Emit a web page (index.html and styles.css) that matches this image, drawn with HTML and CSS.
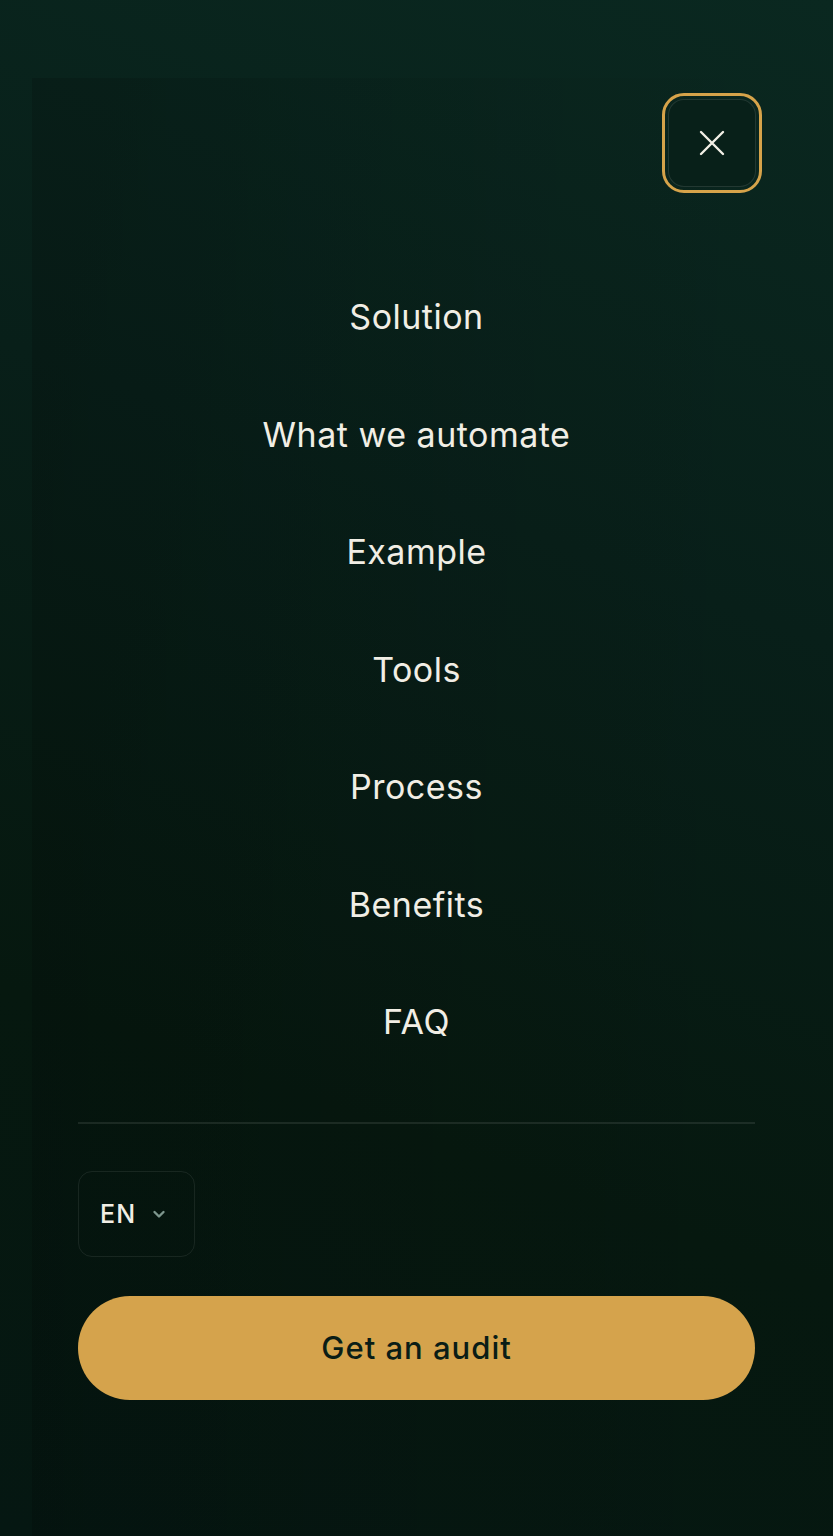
FILE: index.html
```html
<!DOCTYPE html>
<html lang="en">
<head>
<meta charset="utf-8">
<title>Menu</title>
<link rel="stylesheet" href="styles.css">
</head>
<body>
<div class="page">
  <div class="panel">
    <header class="top">
      <button class="close" aria-label="Close menu">
        <svg width="28" height="28" viewBox="0 0 28 28" fill="none" stroke="#f2efe6" stroke-width="2.4" stroke-linecap="round"><path d="M3 3L25 25M25 3L3 25"/></svg>
      </button>
    </header>
    <nav class="nav">
      <a href="#">Solution</a>
      <a href="#">What we automate</a>
      <a href="#">Example</a>
      <a href="#">Tools</a>
      <a href="#">Process</a>
      <a href="#">Benefits</a>
      <a href="#">FAQ</a>
    </nav>
    <div class="bottom">
      <hr class="divider">
      <button class="lang">EN
        <svg width="14" height="10" viewBox="0 0 14 10" fill="none" stroke="#7d968d" stroke-width="2.4" stroke-linecap="round" stroke-linejoin="round"><path d="M2.5 3l4.5 4.5 4.5-4.5"/></svg>
      </button>
      <button class="cta">Get an audit</button>
    </div>
  </div>
</div>
</body>
</html>
```
FILE: styles.css
```css
* { box-sizing: border-box; }
html, body { margin: 0; padding: 0; }
body {
  width: 833px;
  height: 1536px;
  overflow: hidden;
  font-family: "Inter", "Noto Sans", sans-serif;
  background: linear-gradient(200deg, #0a2820 0%, #081f19 35%, #06180f 70%, #051712 100%);
  color: #f1eee5;
}
.page {
  height: 1536px;
  padding: 78px 32px 0 32px;
}
.panel {
  height: 1458px;
  background: linear-gradient(90deg, rgba(0,0,0,0.16) 0%, rgba(0,0,0,0.08) 40%, rgba(0,0,0,0) 100%);
  padding: 0 46px;
  display: flex;
  flex-direction: column;
}
.top {
  display: flex;
  justify-content: flex-end;
  padding-top: 21px;
  margin-right: -1px;
}
.close {
  width: 88px;
  height: 88px;
  border-radius: 16px;
  border: 1.5px solid rgba(255,255,255,0.11);
  background: #082019;
  outline: 3.5px solid #d6a34a;
  outline-offset: 3px;
  display: flex;
  align-items: center;
  justify-content: center;
  padding: 0;
}
.nav {
  display: flex;
  flex-direction: column;
  align-items: center;
  margin-top: 71px;
}
.nav a {
  height: 117.5px;
  display: flex;
  align-items: center;
  color: #f1eee5;
  text-decoration: none;
  font-size: 34px;
  font-weight: 400;
  letter-spacing: 0.5px;
}
.bottom {
  display: flex;
  flex-direction: column;
  margin-top: 41px;
}
.divider {
  margin: 0;
  border: none;
  height: 2px;
  background: rgba(255,255,255,0.09);
}
.lang {
  margin-top: 47px;
  width: 117px;
  height: 86px;
  border-radius: 14px;
  border: 1.5px solid rgba(255,255,255,0.08);
  background: transparent;
  color: #f1eee5;
  font-family: "Inter", sans-serif;
  font-size: 25px;
  font-weight: 500;
  letter-spacing: 1.2px;
  display: flex;
  align-items: center;
  gap: 16px;
  padding: 0 0 0 21px;
}
.cta {
  margin-top: 39px;
  height: 104px;
  border-radius: 52px;
  border: none;
  background: #d5a34c;
  color: #0a1d16;
  font-family: "Inter", sans-serif;
  font-size: 31px;
  font-weight: 500;
  letter-spacing: 1px;
}
```
